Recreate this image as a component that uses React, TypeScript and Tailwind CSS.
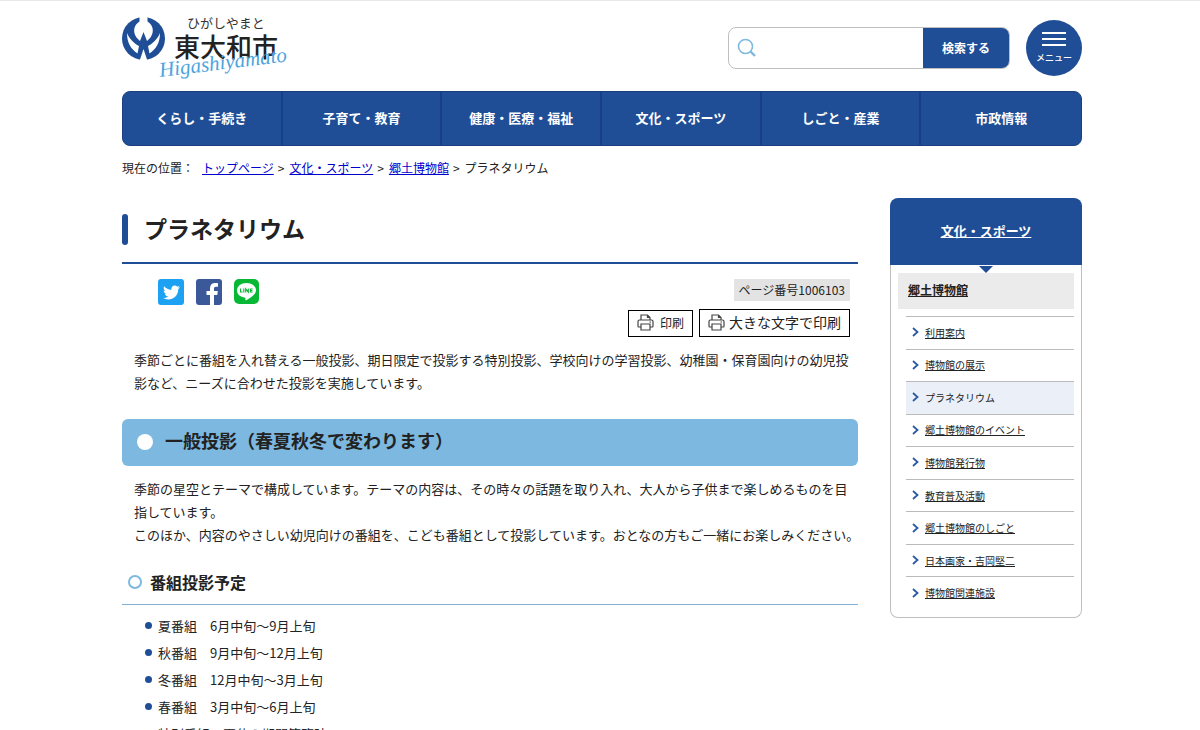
import React from "react";
import { FaTwitter } from "react-icons/fa";

const navItems = [
  "くらし・手続き",
  "子育て・教育",
  "健康・医療・福祉",
  "文化・スポーツ",
  "しごと・産業",
  "市政情報",
];

const crumbs = ["トップページ", "文化・スポーツ", "郷土博物館"];

const sideItems = [
  "利用案内",
  "博物館の展示",
  "プラネタリウム",
  "郷土博物館のイベント",
  "博物館発行物",
  "教育普及活動",
  "郷土博物館のしごと",
  "日本画家・吉岡堅二",
  "博物館関連施設",
];

const programs = [
  "夏番組　6月中旬～9月上旬",
  "秋番組　9月中旬～12月上旬",
  "冬番組　12月中旬～3月上旬",
  "春番組　3月中旬～6月上旬",
  "特別番組　夏休み期間等臨時",
];

const Logo = () => (
  <svg width="172" height="68" viewBox="0 0 172 68" role="img" aria-label="東大和市">
    <circle cx="21.5" cy="23.5" r="21.5" fill="#1f4e96" />
    <path d="M17.500 0h8v9h-8z" fill="#fff" />
    <path
      d="M18.500 6C11.500 9.500 10.500 17 14.500 22.500l3.500 3.500 3.500-9 3.500 9 3.500-3.500c4-5.500 3-13-4-16.500z"
      fill="#fff"
    />
    <path d="M5 18c0 10 4 16 10.500 20.500l1.500-7.500C12 28.500 7.500 24 5 18z" fill="#fff" />
    <path d="M38 18c0 10-4 16-10.500 20.500L26 31c5-2.500 9.500-7 12-13z" fill="#fff" />
    <path d="M21.500 34l-4 12h8z" fill="#fff" />
    <text x="65" y="13" fontSize="13" fill="#333">
      ひがしやまと
    </text>
    <text x="52" y="42" fontSize="26" fontWeight="500" fill="#222">
      東大和市
    </text>
    <text
      x="38"
      y="62"
      fontSize="21"
      fill="#4ea3dc"
      fontStyle="italic"
      fontFamily="Liberation Serif, serif"
      transform="rotate(-7 38 62)"
    >
      Higashiyamato
    </text>
  </svg>
);

const PrinterIcon = () => (
  <svg width="17" height="17" viewBox="0 0 17 17" fill="none" stroke="#444" strokeWidth="1.200">
    <path d="M4 6V1h6.500L13 3.500V6M10.500 1v2.500H13" />
    <path d="M4 13H1.500Q1 13 1 12V7.500Q1 6 2.500 6h12Q16 6 16 7.500V12q0 1-.5 1H13" />
    <path d="M4 10h9v6H4zM12.500 8h1.500" />
  </svg>
);

const FacebookIcon = () => (
  <svg width="26" height="26" viewBox="0 0 26 26">
    <path
      d="M14 26V16h-3.500v-4H14V9.200C14 5.800 16 4 19.200 4c1.400 0 2.300.1 2.800.2v3.600h-2c-1.600 0-2 .8-2 2V12h3.800l-.5 4H18v10z"
      fill="#fff"
    />
  </svg>
);

const LineIcon = () => (
  <svg width="25" height="25" viewBox="0 0 25 25">
    <path
      d="M12.500 4C7.200 4 3 7.200 3 11.400c0 3.600 3.200 6.600 7.600 7.200 1 .2.900.6.700 2.300 0 .5.300.6.800.3 2.600-1.500 9.900-5.500 9.900-9.800C22 7.200 17.800 4 12.500 4z"
      fill="#fff"
    />
    <path
      d="M6.500 9.500v3.500h2M9.800 9.500V13.500M11.700 13.500V9.800l2.600 3.400V9.500M18.600 10h-2.200v3h2.200M16.400 11.500h2"
      fill="none"
      stroke="#06b833"
      strokeWidth="1.100"
    />
  </svg>
);

const Header = () => (
  <header className="flex items-start justify-between">
    <a href="#" className="mt-[14px]">
      <Logo />
    </a>
    <div className="mt-[19px] flex items-center gap-4">
      <form className="flex h-[42px] w-[282px] overflow-hidden rounded-lg border border-[#bfbfbf]">
        <label htmlFor="search" className="flex items-center pl-2">
          <svg width="20" height="20" viewBox="0 0 20 20" fill="none" stroke="#7db8df">
            <circle cx="8.500" cy="8.500" r="7" strokeWidth="1.600" />
            <path d="M13.500 13.500l4.500 4.500" strokeWidth="2.400" />
          </svg>
        </label>
        <input
          id="search"
          type="text"
          aria-label="サイト内検索"
          className="min-w-0 flex-1 px-2 text-[13px] outline-none"
        />
        <button type="button" className="w-[86px] bg-[#1f4e96] text-[12px] font-bold text-white">
          検索する
        </button>
      </form>
      <button
        type="button"
        className="flex h-14 w-14 flex-col items-center rounded-full bg-[#1f4e96] pt-3 text-white"
      >
        <span className="flex w-6 flex-col gap-1">
          <span className="h-[2px] bg-white" />
          <span className="h-[2px] bg-white" />
          <span className="h-[2px] bg-white" />
        </span>
        <span className="mt-[6px] text-[9px] leading-3 font-medium">メニュー</span>
      </button>
    </div>
  </header>
);

const NavBar = () => (
  <nav className="mt-2 grid grid-cols-6 overflow-hidden rounded-lg border border-[#1a4080] bg-[#1f4e96]">
    {navItems.map((item) => (
      <a
        key={item}
        href="#"
        className="flex h-[53px] items-center justify-center border-r-2 border-[#163f85] pb-[2px] text-[13px] font-bold text-white last:border-r-0"
      >
        {item}
      </a>
    ))}
  </nav>
);

const Breadcrumb = () => (
  <div className="mt-3 flex text-[12px] leading-5">
    <span className="mr-2">現在の位置：</span>
    {crumbs.map((crumb) => (
      <span key={crumb}>
        <a href="#" className="text-[#0000cc] underline">
          {crumb}
        </a>
        <span className="mr-[5px] ml-1">&gt;</span>
      </span>
    ))}
    <span>プラネタリウム</span>
  </div>
);

const Tools = () => (
  <div className="mt-[15px] flex items-start justify-between pr-2 pl-9">
    <div className="flex gap-3">
      <a
        href="#"
        aria-label="Twitter"
        className="flex h-[26px] w-[26px] items-center justify-center rounded-[3px] bg-[#1da1f2] text-white"
      >
        <FaTwitter size={17} />
      </a>
      <a
        href="#"
        aria-label="Facebook"
        className="h-[26px] w-[26px] overflow-hidden rounded-[3px] bg-[#3b5998]"
      >
        <FacebookIcon />
      </a>
      <a href="#" aria-label="LINE" className="h-[25px] w-[25px] rounded-[5px] bg-[#06b833]">
        <LineIcon />
      </a>
    </div>
    <div className="flex flex-col items-end gap-2">
      <p className="bg-[#e3e3e3] px-[5px] text-[12px] leading-[22px]">ページ番号1006103</p>
      <div className="flex items-end gap-[6px]">
        <button
          type="button"
          className="flex h-[27px] items-center gap-[6px] border border-black px-2 pb-[2px] text-[12px]"
        >
          <PrinterIcon />
          印刷
        </button>
        <button
          type="button"
          className="flex h-7 items-center gap-1 border border-black px-2 pb-[2px] text-[14px]"
        >
          <PrinterIcon />
          大きな文字で印刷
        </button>
      </div>
    </div>
  </div>
);

const SideMenu = () => (
  <aside className="w-1/5 shrink-0">
    <a
      href="#"
      className="flex h-[67px] items-center justify-center rounded-t-lg bg-[#1f4e96] pb-[2px] text-[13px] font-bold text-white underline"
    >
      文化・スポーツ
    </a>
    <div className="rounded-b-lg border border-t-0 border-[#bfbfbf] px-[7px] pb-2">
      <svg width="14" height="8" viewBox="0 0 14 8" className="mx-auto">
        <path d="M0 1h14L7 8z" fill="#1f4e96" />
      </svg>
      <div className="h-9 bg-[#ebebeb] px-[10px] text-[12px] leading-[34px] font-bold">
        <a href="#" className="underline">
          郷土博物館
        </a>
      </div>
      <ul className="mt-[7px] ml-2 grid h-[293px] auto-rows-fr text-[10px]">
        {sideItems.map((item) => (
          <li
            key={item}
            className={
              item === "プラネタリウム"
                ? "flex items-center gap-[6px] border-t border-[#bbb] bg-[#ebeff8] pb-px pl-[6px]"
                : "flex items-center gap-[6px] border-t border-[#bbb] pb-px pl-[6px]"
            }
          >
            <svg width="7" height="10" viewBox="0 0 7 10" fill="none" stroke="#2b5aa5" strokeWidth="1.800">
              <path d="M1 1l4.500 4L1 9" />
            </svg>
            {item === "プラネタリウム" ? (
              <span>{item}</span>
            ) : (
              <a href="#" className="underline">
                {item}
              </a>
            )}
          </li>
        ))}
      </ul>
    </div>
  </aside>
);

const App = () => {
  return (
    <div className="border-t border-[#e8e8e8] bg-white pl-1 font-['Noto_Sans_CJK_JP',sans-serif] text-[#222]">
      <div className="mx-auto max-w-[960px]">
        <Header />
        <NavBar />
        <Breadcrumb />
        <div className="mt-5 flex items-start gap-8">
          <main className="min-w-0 flex-1">
            <div className="flex h-[66px] items-center border-b-2 border-[#1f4e96] pb-[2px]">
              <span className="h-[31px] w-[6px] rounded-sm bg-[#1f4e96]" />
              <h1 className="ml-4 pb-[2px] text-[23px] font-bold">プラネタリウム</h1>
            </div>
            <Tools />
            <p className="mt-[11px] pl-3 text-[13px] leading-[23px]">
              季節ごとに番組を入れ替える一般投影、期日限定で投影する特別投影、学校向けの学習投影、幼稚園・保育園向けの幼児投影など、ニーズに合わせた投影を実施しています。
            </p>
            <h2 className="mt-[25px] flex h-[47px] items-center gap-3 rounded-md bg-[#7cb8df] pb-[2px] pl-[15px] text-[18px] font-bold">
              <span className="h-4 w-4 rounded-full bg-white" />
              <span className="pb-[2px]">一般投影（春夏秋冬で変わります）</span>
            </h2>
            <p className="mt-[11px] pl-3 text-[13px] leading-[23px]">
              季節の星空とテーマで構成しています。テーマの内容は、その時々の話題を取り入れ、大人から子供まで楽しめるものを目指しています。
            </p>
            <p className="-mr-2 pl-3 text-[13px] leading-[23px]">
              このほか、内容のやさしい幼児向けの番組を、こども番組として投影しています。おとなの方もご一緒にお楽しみください。
            </p>
            <h3 className="mt-[14px] flex h-[45px] items-center gap-2 border-b border-[#7fb0d4] pl-[6px] text-[16px] font-bold">
              <span className="h-[14px] w-[14px] rounded-full border-2 border-[#7cb8df]" />
              番組投影予定
            </h3>
            <ul className="mt-[7px] pl-[23px] text-[13px] leading-[27px]">
              {programs.map((program) => (
                <li key={program} className="flex items-center gap-[6px]">
                  <span className="h-[7px] w-[7px] rounded-full bg-[#1f4e96]" />
                  {program}
                </li>
              ))}
            </ul>
          </main>
          <SideMenu />
        </div>
      </div>
    </div>
  );
};

export default App;
